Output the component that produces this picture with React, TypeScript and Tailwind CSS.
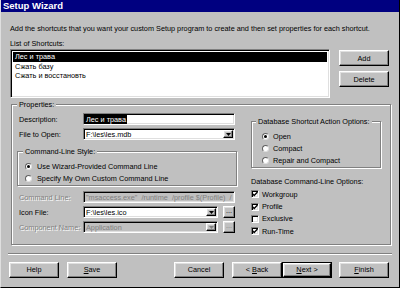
import React from 'react';

const raised =
  'border border-t-white border-l-white border-r-black border-b-black bg-[#c0c0c0] shadow-[inset_-1px_-1px_0_#808080,inset_1px_1px_0_#dfdfdf]';
const sunken =
  'border border-t-[#808080] border-l-[#808080] border-r-white border-b-white shadow-[inset_1px_1px_0_#000,inset_-1px_-1px_0_#dfdfdf]';

function GroupBox({
  label,
  labelClass = 'ml-[5px]',
  className = '',
  bodyClass = '',
  children,
}: {
  label: string;
  labelClass?: string;
  className?: string;
  bodyClass?: string;
  children: React.ReactNode;
}) {
  return (
    <div className={`border border-[#808080] shadow-[1px_1px_0_#fff,inset_1px_1px_0_#fff] ${className}`}>
      <div className={`-mt-[5px] px-[2px] w-fit whitespace-nowrap bg-[#c0c0c0] leading-[9px] ${labelClass}`}>{label}</div>
      <div className={bodyClass}>{children}</div>
    </div>
  );
}

function Button({ children, isDefault = false, className = '' }: { children: React.ReactNode; isDefault?: boolean; className?: string }) {
  if (isDefault) {
    return (
      <div className={`w-[50px] h-[16px] border border-black ${className}`}>
        <div className={`h-full flex items-center justify-center ${raised}`}>{children}</div>
      </div>
    );
  }
  return <div className={`w-[50px] h-[16px] flex items-center justify-center ${raised} ${className}`}>{children}</div>;
}

function Arrow({ disabled = false }: { disabled?: boolean }) {
  return (
    <div className={`w-[10px] h-[8px] flex items-center justify-center ${raised}`}>
      <svg width="5" height="3" viewBox="0 0 5 3">
        <polygon points="0,0 5,0 2.5,3" fill={disabled ? '#808080' : '#000'} />
      </svg>
    </div>
  );
}

function Combo({ value, width, disabled = false }: { value: string; width: string; disabled?: boolean }) {
  return (
    <div className={`h-[12px] flex items-center pl-[2px] pr-[1px] ${width} ${sunken} ${disabled ? 'bg-[#c0c0c0] text-[#808080]' : 'bg-white'}`}>
      <span className="flex-1 whitespace-nowrap overflow-hidden">{value}</span>
      <Arrow disabled={disabled} />
    </div>
  );
}

function Radio({ checked = false }: { checked?: boolean }) {
  return (
    <div className="w-[7px] h-[7px] rounded-full bg-white border border-t-[#606060] border-l-[#606060] border-r-[#dfdfdf] border-b-[#dfdfdf] flex items-center justify-center">
      {checked && <div className="w-[3px] h-[3px] rounded-full bg-black" />}
    </div>
  );
}

function Check({ checked = false }: { checked?: boolean }) {
  return (
    <div className={`w-[8px] h-[8px] bg-white flex items-center justify-center ${sunken}`}>
      {checked && (
        <svg width="6" height="6" viewBox="0 0 6 6">
          <polyline points="0.5,2.8 2.2,4.5 5.5,1" fill="none" stroke="#000" strokeWidth="1.3" />
        </svg>
      )}
    </div>
  );
}

const disabledLabel = 'text-[#808080] [text-shadow:1px_1px_0_#fff]';

export default function App() {
  return (
    <div className="w-[400px] h-[288px] bg-[#c0c0c0] text-black text-[7.3px] leading-[9px] font-['Liberation_Sans',Arial,sans-serif] border-l border-l-[#dfdfdf] border-r border-r-black border-b border-b-black overflow-hidden flex flex-col">
      {/* title */}
      <div className="h-[12px] bg-[#000080] text-white font-bold text-[9.5px] leading-[12px] pl-[2px]">Setup Wizard</div>

      <div className="pl-[9px]">
        <p className="mt-[11.5px] whitespace-nowrap">
          Add the shortcuts that you want your custom Setup program to create and then set properties for each shortcut.
        </p>
        <p className="mt-[6px]">List of Shortcuts:</p>

        <div className="flex items-start mt-[1.5px]">
          <div className={`w-[320px] h-[49px] bg-white p-[2px] ${sunken}`}>
            <div className="h-[9.5px] leading-[9.5px] bg-black text-white pl-[2px]">Лес и трава</div>
            <div className="h-[9.5px] leading-[9.5px] pl-[2px]">Сжать базу</div>
            <div className="h-[9.5px] leading-[9.5px] pl-[2px]">Сжать и восстановть</div>
          </div>
          <div className="ml-[9px] mt-[1px] flex flex-col gap-[5px]">
            <Button className="h-[15px]">Add</Button>
            <Button className="h-[15px]">Delete</Button>
          </div>
        </div>

        {/* properties */}
        <GroupBox label="Properties:" labelClass="ml-[5px]" className="ml-[1px] mt-[6px] w-[380px] pb-[6px]">
          <div className="flex items-start pl-[5px]">
            <div className="w-[220px] pt-[4px]">
              <div className="flex items-center h-[12px]">
                <span className="w-[66px] pl-[2px]">Description:</span>
                <div className={`w-[152px] h-[12px] bg-white flex items-center pl-[1px] ${sunken}`}>
                  <span className="bg-black text-white px-[1px]">Лес и трава</span>
                </div>
              </div>
              <div className="flex items-center h-[12px] mt-[3px]">
                <span className="w-[66px] pl-[2px]">File to Open:</span>
                <Combo value="F:\les\les.mdb" width="w-[152px]" />
              </div>

              <GroupBox label="Command-Line Style:" labelClass="ml-[5px]" className="mt-[11px] w-[220px] pb-[1px]" bodyClass="pl-[7px]">
                <div className="mt-[4px] flex items-center gap-[5px] h-[12px]">
                  <Radio checked />
                  <span>Use Wizard-Provided Command Line</span>
                </div>
                <div className="flex items-center gap-[5px] h-[12px]">
                  <Radio />
                  <span>Specify My Own Custom Command Line</span>
                </div>
              </GroupBox>

              <div className="flex items-center h-[12px] mt-[5px]">
                <span className={`w-[66px] pl-[2px] ${disabledLabel}`}>Command Line:</span>
                <div className={`w-[152px] h-[12px] bg-[#c0c0c0] text-[#808080] flex items-center pl-[2px] whitespace-pre overflow-hidden ${sunken}`}>
                  {'"msaccess.exe"  /runtime  /profile $(Profile)  /'}
                </div>
              </div>
              <div className="flex items-center h-[12px] mt-[3px]">
                <span className="w-[66px] pl-[2px]">Icon File:</span>
                <Combo value="F:\les\les.ico" width="w-[135px]" />
                <div className={`ml-[5px] w-[12px] h-[12px] flex items-center justify-center pb-[3px] ${raised}`}>...</div>
              </div>
              <div className="flex items-center h-[12px] mt-[3px]">
                <span className={`w-[66px] pl-[2px] whitespace-nowrap ${disabledLabel}`}>Component Name:</span>
                <Combo value="Application" width="w-[135px]" disabled />
                <div className={`ml-[5px] w-[12px] h-[12px] flex items-center justify-center pb-[3px] text-[#808080] ${raised}`}>...</div>
              </div>
            </div>

            <div className="ml-[14px] w-[130px] pt-[12px]">
              <GroupBox label="Database Shortcut Action Options:" labelClass="ml-[4px]" className="w-[130px] pb-[1px]" bodyClass="pl-[10px]">
                <div className="mt-[4px] flex items-center gap-[4px] h-[12px]">
                  <Radio checked />
                  <span>Open</span>
                </div>
                <div className="flex items-center gap-[4px] h-[12px]">
                  <Radio />
                  <span>Compact</span>
                </div>
                <div className="flex items-center gap-[4px] h-[12px]">
                  <Radio />
                  <span>Repair and Compact</span>
                </div>
              </GroupBox>
              <p className="mt-[8.5px] whitespace-nowrap">Database Command-Line Options:</p>
              <div className="mt-[2.5px]">
                {[
                  ['Workgroup', true],
                  ['Profile', true],
                  ['Exclusive', false],
                  ['Run-Time', true],
                ].map(([name, on]) => (
                  <div key={name as string} className="flex items-center gap-[3px] h-[12.4px]">
                    <Check checked={on as boolean} />
                    <span>{name as string}</span>
                  </div>
                ))}
              </div>
            </div>
          </div>
        </GroupBox>
      </div>

      {/* separator */}
      <div className="mt-[8px] mx-[7px] border-t border-t-[#808080] border-b border-b-white" />

      {/* buttons */}
      <div className="flex mt-[7px] pl-[8px]">
        <Button>Help</Button>
        <Button className="ml-[8px]">
          <span><u>S</u>ave</span>
        </Button>
        <Button className="ml-[57px]">Cancel</Button>
        <Button className="ml-[8px]">
          <span>&lt; <u>B</u>ack</span>
        </Button>
        <Button isDefault>
          <span><u>N</u>ext &gt;</span>
        </Button>
        <Button className="ml-[7px]">
          <span><u>F</u>inish</span>
        </Button>
      </div>
    </div>
  );
}
